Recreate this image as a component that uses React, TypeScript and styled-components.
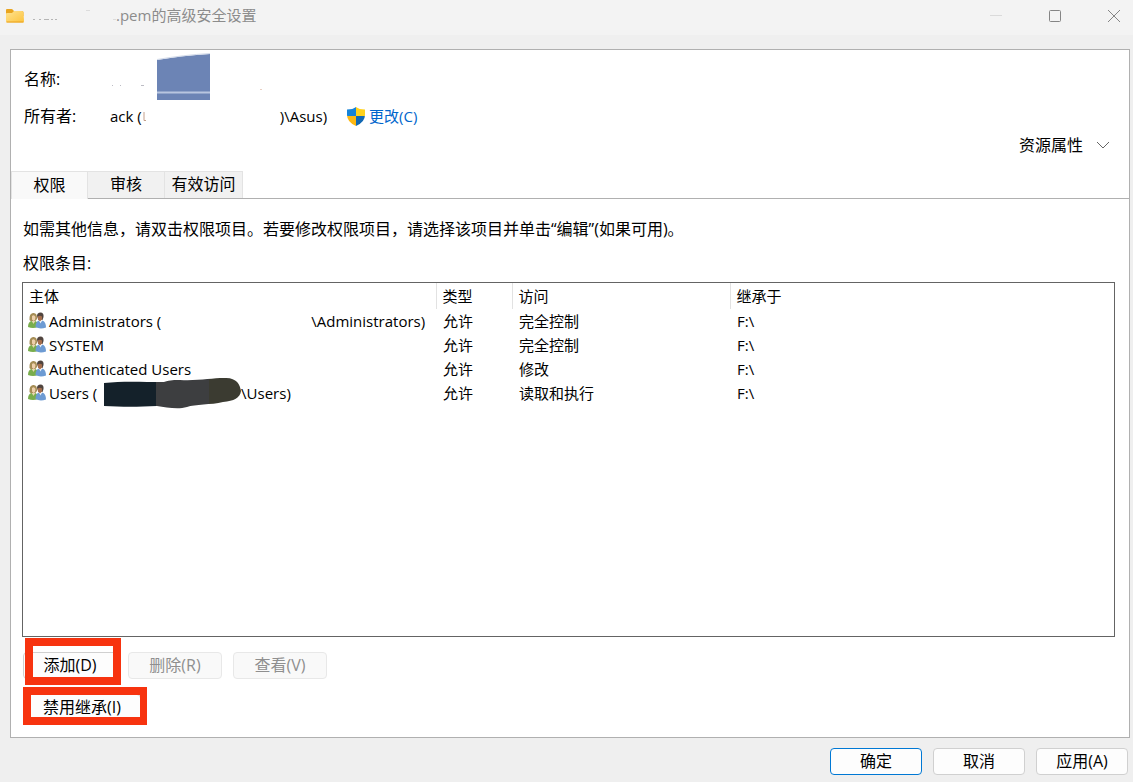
import React from 'react';
import styled, { createGlobalStyle } from 'styled-components';

const Global = createGlobalStyle`
  *, *::before, *::after { box-sizing: border-box; }
  body {
    margin: 0;
    background: #efefef;
    color: #000;
    font: 16px/24px "Open Sans", "Noto Sans CJK SC", sans-serif;
  }
  button { font: inherit; color: inherit; }
`;

const Dialog = styled.div`
  display: flex;
  flex-direction: column;
  min-height: 100vh;
`;

const TitleBar = styled.header`
  display: flex;
  align-items: center;
  height: 35px;
  padding: 0 0 5px 6px;
  background: #f3f3f3;
`;

const Title = styled.h1`
  margin: 0;
  font-size: 15px;
  line-height: 24px;
  font-weight: 400;
  color: #8c8c8c;
`;

const WindowControls = styled.div`
  display: flex;
  align-self: flex-start;
  gap: 21px;
  margin-left: auto;
`;

const WindowButton = styled.button`
  display: flex;
  align-items: center;
  justify-content: center;
  width: 38px;
  height: 32px;
  padding: 0;
  border: 0;
  background: none;
`;

const Panel = styled.main`
  display: flex;
  flex: 1;
  flex-direction: column;
  margin: 14px 3px 0 10px;
  border: 1px solid #b0b0b0;
  background: #fff;
`;

const Details = styled.dl`
  display: grid;
  grid-template-columns: 86px 1fr;
  margin: 0;
  padding: 5px 0 0 13px;
`;

const Term = styled.dt`
  display: flex;
  align-items: center;
`;

const Detail = styled.dd<{ $tall?: boolean }>`
  display: flex;
  align-items: center;
  height: ${p => (p.$tall ? 48 : 26)}px;
  margin: 0;
  font-size: 15px;
  white-space: pre;
`;

const ChangeLink = styled.a`
  display: flex;
  align-items: center;
  gap: 4px;
  margin-left: 20px;
  color: #0066cc;
  text-decoration: none;
`;

const ResourceToggle = styled.button`
  display: flex;
  align-items: center;
  align-self: flex-end;
  gap: 13px;
  margin: 4px 19px 0 0;
  padding: 0;
  border: 0;
  background: none;
`;

const TabBar = styled.div`
  display: flex;
  margin-top: 14px;
  height: 28px;
  border-bottom: 1px solid #b0b0b0;
`;

const Tab = styled.button<{ $active?: boolean; $wide?: boolean }>`
  width: ${p => (p.$wide ? 78 : 77)}px;
  height: ${p => (p.$active ? 28 : 27)}px;
  padding: 0 0 2px;
  border: 1px solid #e3e3e3;
  border-width: ${p => (p.$active ? '1px 1px 0 1px' : '1px 1px 0 0')};
  background: ${p => (p.$active ? '#f9f9f9' : '#f1f1f1')};
`;

const TabPage = styled.section`
  display: flex;
  flex: 1;
  flex-direction: column;
  padding: 18px 14px 16px 11px;
`;

const Text = styled.p`
  margin: 0 0 10px 1px;
`;

const ListBox = styled.div`
  flex: 1;
  margin-top: -3px;
  border: 1px solid #646464;
  background: #fff;
`;

const Table = styled.table`
  width: 100%;
  border-collapse: collapse;
  table-layout: fixed;
  font-size: 15px;
  line-height: 24px;
`;

const HeadCell = styled.th<{ $width?: number }>`
  width: ${p => (p.$width ? p.$width + 'px' : 'auto')};
  height: 26px;
  padding: 0 6px;
  border-right: ${p => (p.$width ? '1px solid #e2e2e2' : '0')};
  font-weight: 400;
  text-align: left;
`;

const Cell = styled.td`
  height: 24px;
  padding: 0 7px;
`;

const PrincipalCell = styled(Cell)`
  padding: 0 0 0 5px;
  white-space: pre;
`;

const Principal = styled.div`
  display: flex;
  align-items: center;
  height: 24px;
`;

const Blank = styled.span<{ $width: number }>`
  flex: none;
  width: ${p => p.$width}px;
`;

const Actions = styled.div`
  display: flex;
  gap: 11px;
  margin: 15px 0 0 1px;
`;

const Footer = styled.footer`
  display: flex;
  justify-content: flex-end;
  gap: 11px;
  padding: 10px 5px 7px;
`;

const Button = styled.button<{ $primary?: boolean; $width: number }>`
  width: ${p => p.$width}px;
  height: 27px;
  padding: 0 0 1px;
  border: 1px solid ${p => (p.$primary ? '#0078d4' : '#d0d0d0')};
  border-radius: 4px;
  background: #fdfdfd;
  line-height: 24px;

  &:disabled {
    border-color: #e8e8e8;
    background: #f9f9f9;
    color: #8f8f8f;
  }
`;

const Marked = styled.div<{ $frame: 'add' | 'inherit' }>`
  position: relative;
  display: flex;

  &::after {
    content: '';
    position: absolute;
    inset: ${p => (p.$frame === 'add' ? '-14px -4px -6px 2px' : '-7px -6px -4px 0')};
    border: solid #f7330f;
    border-width: ${p => (p.$frame === 'add' ? '8px' : '8px 7px 8px 8px')};
    pointer-events: none;
  }
`;

const PeopleIcon = styled.svg`
  flex: none;
  margin: 0 3px 2px 0;
`;

const RedactionArt = styled.svg`
  overflow: visible;
`;

const Folder = () => (
  <svg width="18" height="15" viewBox="0 0 18 15" aria-hidden="true">
    <defs>
      <linearGradient id="folder" x1="0" y1="0" x2="1" y2="1">
        <stop offset="0" stopColor="#ffe391" />
        <stop offset="1" stopColor="#fcc33d" />
      </linearGradient>
    </defs>
    <path d="M0 2Q0 1 1 1H5.500Q6.500 1 7 2L8 3H16Q17.500 3 17.500 4.500V8H0Z" fill="#e9a520" />
    <path d="M0 6Q0 5 1 5H6L8 3H16Q17.500 3 17.500 4.500L18 13Q18 14.500 16.500 14.500H1.500Q0 14.500 0 13Z" fill="url(#folder)" />
    <path d="M0.500 14H17.500" stroke="#eaa11d" />
  </svg>
);

const TitleSmudge = () => (
  <svg width="92" height="20" viewBox="0 0 92 20" fill="none" stroke="#b5b5b5" aria-hidden="true">
    <path d="M9 14.500H11M15 14.500H17M20 14.500H25M27 14.500H29M31 14.500H33" />
    <path d="M62 5.500H66M89 14.500H92" stroke="#dcdcdc" />
  </svg>
);

const Shield = () => (
  <svg width="18" height="19" viewBox="0 0 18 19" aria-hidden="true">
    <clipPath id="shield"><path d="M9 0Q12 2.500 18 2.500V8Q18 15 9 19Q0 15 0 8V2.500Q6 2.500 9 0Z" /></clipPath>
    <g clipPath="url(#shield)">
      <path d="M0 0H9V9H0Z" fill="#1683d8" />
      <path d="M9 0H18V9H9Z" fill="#ffd21c" />
      <path d="M0 9H9V19H0Z" fill="#fdb813" />
      <path d="M9 9H18V19H9Z" fill="#1268b3" />
    </g>
  </svg>
);

const Redaction = () => (
  <RedactionArt width="153" height="48" viewBox="0 3 153 48" aria-hidden="true">
    <path d="M47 8C65 5 82 3 100 2V48H47Z" fill="#6c84b5" />
    <path d="M47 7.500C65 4.500 82 2.500 100 1.500" stroke="#d3dbea" fill="none" />
    <path d="M47 40.500H100" stroke="#b8c5df" strokeWidth="2" />
    <path d="M2 33.500H3M10 33.500H11M31 33.500H34" stroke="#bcbcc4" />
    <path d="M150 37.500H152" stroke="#e9cfc2" />
  </RedactionArt>
);

const NameRemnant = () => (
  <svg width="4" height="12" viewBox="0 0 4 12" aria-hidden="true">
    <path d="M2 2V10.500H4" fill="none" stroke="#c3a08c" />
  </svg>
);

const People = () => (
  <PeopleIcon width="18" height="17" viewBox="0 0 18 17" aria-hidden="true">
    <path d="M1.500 8Q1 1.500 5 1Q9.500 0.500 9 7L7 9.500H3Z" fill="#a58d55" />
    <path d="M4 4Q6 2 7.500 5L7 8L5.500 9L4 7.500Z" fill="#edcfaa" />
    <path d="M0 15Q0 10 3.500 9L5.500 11L7.500 9Q10 10 10 15Q5 17 0 15Z" fill="#79ad4c" />
    <path d="M4 9L5.500 12L7 9Z" fill="#e9d6ae" />
    <path d="M9 4Q9 0.500 12.500 0.500Q16 0.500 15.500 5L14.500 8H10.500Z" fill="#51453f" />
    <path d="M9.500 4.500Q12 3 14 4.500V7.500L12 9.500L10 7.500Z" fill="#a56e4d" />
    <path d="M7.500 15Q7.500 10 10.500 8.500L12.500 10.500L14.500 8.500Q18 10 18 15.500Q12 17.500 7.500 15Z" fill="#6d9bd3" />
    <path d="M11.500 9.500L12.500 11.500L13.500 9.500Z" fill="#e5edf5" />
  </PeopleIcon>
);

const Scribble = () => (
  <svg width="137" height="32" viewBox="0 -1 137 32" aria-hidden="true">
    <defs>
      <clipPath id="scribble"><path d="M0 5C18 3 36 4 60 4C67 2 70 2 76 2C94 3 108 0 120 0C132 -1 136 6 137 13C136 20 130 23 119 24C107 27 91 26 83 29C73 32 62 29 53 28C34 29 18 29 0 28Z" /></clipPath>
    </defs>
    <g clipPath="url(#scribble)">
      <path d="M0 0H52V32H0Z" fill="#14212a" />
      <path d="M52 0H105V32H52Z" fill="#3d3e40" />
      <path d="M105 -1H138V32H105Z" fill="#3b3b31" />
    </g>
  </svg>
);

const entries = [
  { name: <>Administrators (<Blank $width={150} />\Administrators)</>, access: '完全控制' },
  { name: 'SYSTEM', access: '完全控制' },
  { name: 'Authenticated Users', access: '修改' },
  { name: <>Users (<Blank $width={7} /><Scribble />\Users)</>, access: '读取和执行' },
];

export default function App() {
  return (
    <Dialog>
      <Global />
      <TitleBar>
        <Folder />
        <TitleSmudge />
        <Title>.pem的高级安全设置</Title>
        <WindowControls>
          <WindowButton aria-label="最小化" disabled>
            <svg width="12" height="12" stroke="#dadada"><path d="M0 5.500H12" /></svg>
          </WindowButton>
          <WindowButton aria-label="最大化">
            <svg width="12" height="12" fill="none" stroke="#858585"><rect x="0.500" y="0.500" width="11" height="11" rx="1" /></svg>
          </WindowButton>
          <WindowButton aria-label="关闭">
            <svg width="12" height="12" stroke="#858585"><path d="M0 0L12 12M12 0L0 12" /></svg>
          </WindowButton>
        </WindowControls>
      </TitleBar>
      <Panel>
        <Details>
          <Term>名称:</Term>
          <Detail $tall><Redaction /></Detail>
          <Term>所有者:</Term>
          <Detail>
            ack (<NameRemnant /><Blank $width={134} />)\Asus)
            <ChangeLink href="#change"><Shield />更改(C)</ChangeLink>
          </Detail>
        </Details>
        <ResourceToggle>
          资源属性
          <svg width="14" height="8" viewBox="0 0 14 8" fill="none" stroke="#666" aria-hidden="true"><path d="M1 1L7 7L13 1" /></svg>
        </ResourceToggle>
        <TabBar role="tablist">
          <Tab role="tab" aria-selected="true" $active>权限</Tab>
          <Tab role="tab" aria-selected="false">审核</Tab>
          <Tab role="tab" aria-selected="false" $wide>有效访问</Tab>
        </TabBar>
        <TabPage>
          <Text>如需其他信息，请双击权限项目。若要修改权限项目，请选择该项目并单击“编辑”(如果可用)。</Text>
          <Text id="entries-label">权限条目:</Text>
          <ListBox>
            <Table aria-labelledby="entries-label">
              <thead>
                <tr>
                  <HeadCell $width={413}>主体</HeadCell>
                  <HeadCell $width={76}>类型</HeadCell>
                  <HeadCell $width={218}>访问</HeadCell>
                  <HeadCell>继承于</HeadCell>
                </tr>
              </thead>
              <tbody>
                {entries.map((entry, i) => (
                  <tr key={i}>
                    <PrincipalCell><Principal><People />{entry.name}</Principal></PrincipalCell>
                    <Cell>允许</Cell>
                    <Cell>{entry.access}</Cell>
                    <Cell>F:\</Cell>
                  </tr>
                ))}
              </tbody>
            </Table>
          </ListBox>
          <Actions>
            <Marked $frame="add"><Button $width={94}>添加(D)</Button></Marked>
            <Button $width={94} disabled>删除(R)</Button>
            <Button $width={94} disabled>查看(V)</Button>
          </Actions>
          <Actions>
            <Marked $frame="inherit"><Button $width={118}>禁用继承(I)</Button></Marked>
          </Actions>
        </TabPage>
      </Panel>
      <Footer>
        <Button $width={92} $primary>确定</Button>
        <Button $width={92}>取消</Button>
        <Button $width={92}>应用(A)</Button>
      </Footer>
    </Dialog>
  );
}
